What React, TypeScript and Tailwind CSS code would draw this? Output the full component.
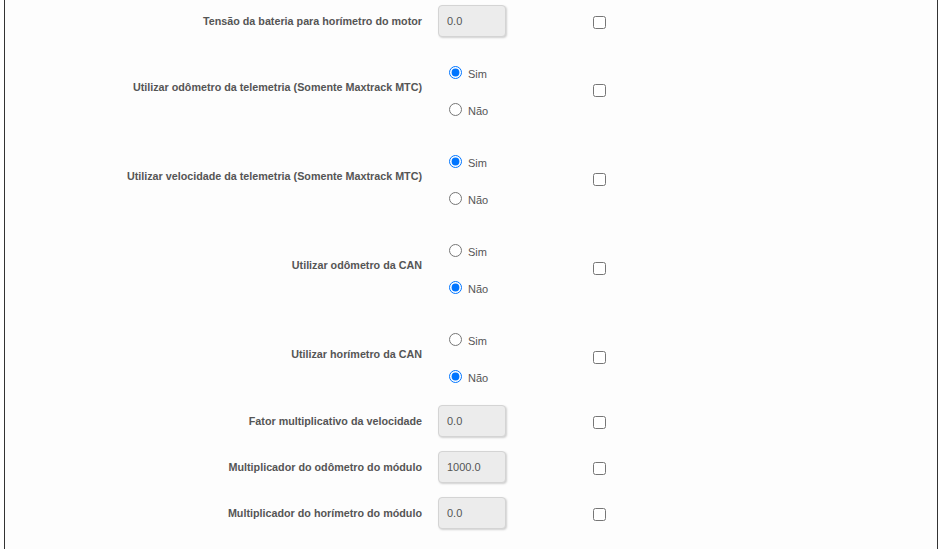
import React from "react";

type Row =
  | { kind: "input"; label: string; value: string }
  | { kind: "radio"; label: string; sim: boolean };

const ROWS: Row[] = [
  { kind: "input", label: "Tensão da bateria para horímetro do motor", value: "0.0" },
  { kind: "radio", label: "Utilizar odômetro da telemetria (Somente Maxtrack MTC)", sim: true },
  { kind: "radio", label: "Utilizar velocidade da telemetria (Somente Maxtrack MTC)", sim: true },
  { kind: "radio", label: "Utilizar odômetro da CAN", sim: false },
  { kind: "radio", label: "Utilizar horímetro da CAN", sim: false },
  { kind: "input", label: "Fator multiplicativo da velocidade", value: "0.0" },
  { kind: "input", label: "Multiplicador do odômetro do módulo", value: "1000.0" },
  { kind: "input", label: "Multiplicador do horímetro do módulo", value: "0.0" },
];

const RadioOption = ({ name, label, checked }: { name: string; label: string; checked: boolean }) => (
  <label className="flex h-[20px] items-center gap-[6px] text-[11px] text-[#555]">
    <input
      type="radio"
      name={name}
      defaultChecked={checked}
      className="m-0 h-[13px] w-[13px] -translate-y-[2px]"
    />
    <span>{label}</span>
  </label>
);

export default function App() {
  return (
    <div
      className="ml-[4px] h-[549px] w-[934px] overflow-hidden border-x border-[#333] bg-[#fdfdfd]"
      style={{ fontFamily: '"Liberation Sans", Arial, sans-serif' }}
    >
      {ROWS.map((row, i) => {
        const isRadio = row.kind === "radio";
        const height = isRadio ? "h-[89px]" : i === 0 ? "h-[42px]" : "h-[46px]";
        return (
          <div key={row.label} className={`flex items-center ${height}`}>
            <div
              className={`w-[417px] text-right text-[10.75px] font-bold text-[#555] ${
                isRadio ? "mt-[2px]" : ""
              }`}
            >
              {row.label}
            </div>
            <div className="ml-[16px] w-[155px]">
              {row.kind === "input" ? (
                <input
                  type="text"
                  readOnly
                  defaultValue={row.value}
                  className="h-[32px] w-[68px] rounded-[4px] border border-[#d4d4d4] bg-[#ececec] px-[8px] text-[11px] text-[#555] shadow-[1px_1px_2px_rgba(0,0,0,0.18)] outline-none"
                />
              ) : (
                <div className="mt-[12px] flex flex-col gap-[17px] pl-[11px]">
                  <RadioOption name={`r${i}`} label="Sim" checked={row.sim} />
                  <RadioOption name={`r${i}`} label="Não" checked={!row.sim} />
                </div>
              )}
            </div>
            <input
              type="checkbox"
              className={`m-0 h-[13px] w-[13px] ${isRadio ? "mt-[8px]" : "mt-[3px]"}`}
            />
          </div>
        );
      })}
    </div>
  );
}
